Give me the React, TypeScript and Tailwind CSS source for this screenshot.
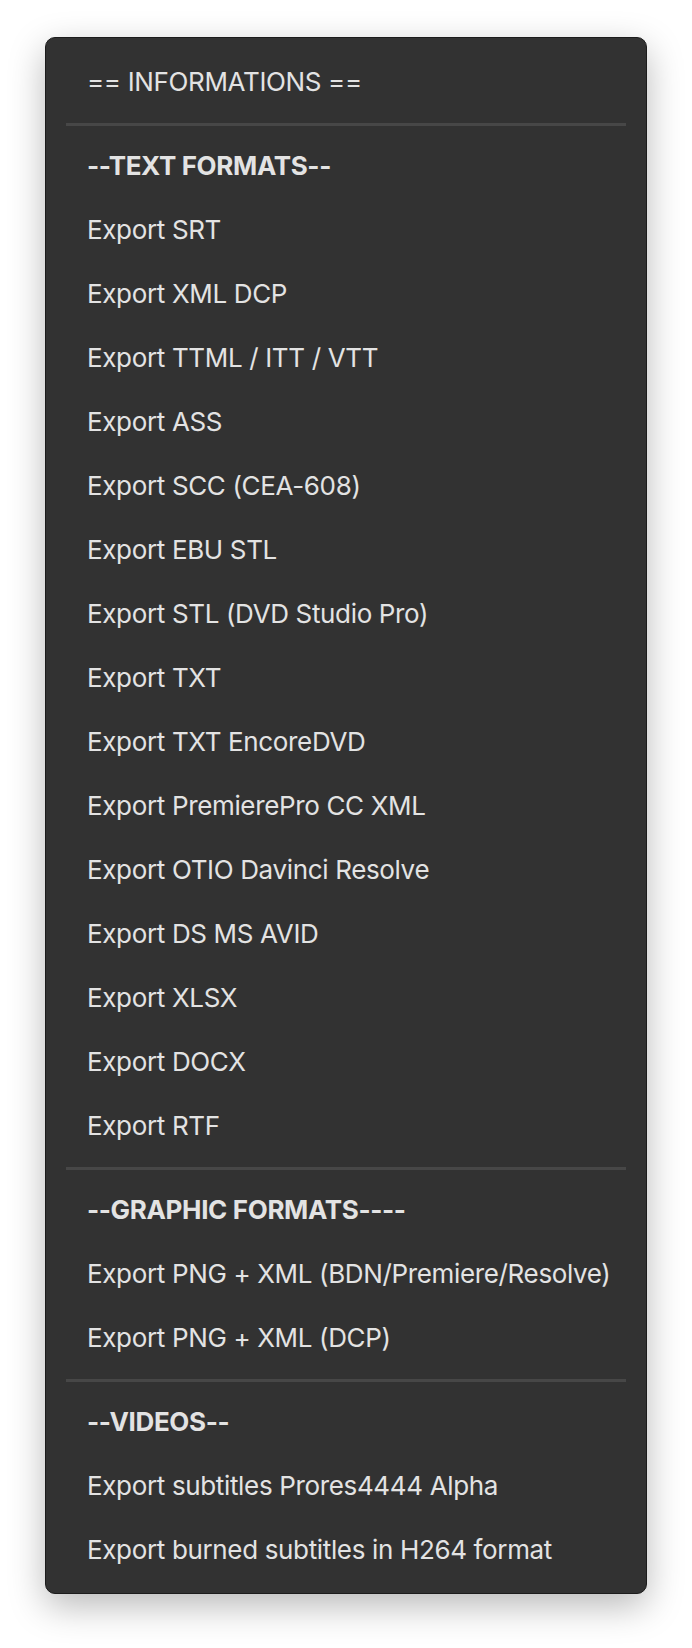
import React from "react";

type Entry =
  | { kind: "item"; label: string; bold?: boolean }
  | { kind: "sep" };

const entries: Entry[] = [
  { kind: "item", label: "== INFORMATIONS ==" },
  { kind: "sep" },
  { kind: "item", label: "--TEXT FORMATS--", bold: true },
  { kind: "item", label: "Export SRT" },
  { kind: "item", label: "Export XML DCP" },
  { kind: "item", label: "Export TTML / ITT / VTT" },
  { kind: "item", label: "Export ASS" },
  { kind: "item", label: "Export SCC (CEA-608)" },
  { kind: "item", label: "Export EBU STL" },
  { kind: "item", label: "Export STL (DVD Studio Pro)" },
  { kind: "item", label: "Export TXT" },
  { kind: "item", label: "Export TXT EncoreDVD" },
  { kind: "item", label: "Export PremierePro CC XML" },
  { kind: "item", label: "Export OTIO Davinci Resolve" },
  { kind: "item", label: "Export DS MS AVID" },
  { kind: "item", label: "Export XLSX" },
  { kind: "item", label: "Export DOCX" },
  { kind: "item", label: "Export RTF" },
  { kind: "sep" },
  { kind: "item", label: "--GRAPHIC FORMATS----", bold: true },
  { kind: "item", label: "Export PNG + XML (BDN/Premiere/Resolve)" },
  { kind: "item", label: "Export PNG + XML (DCP)" },
  { kind: "sep" },
  { kind: "item", label: "--VIDEOS--", bold: true },
  { kind: "item", label: "Export subtitles Prores4444 Alpha" },
  { kind: "item", label: "Export burned subtitles in H264 format" },
];

export default function App() {
  return (
    <div className="min-h-[1648px] w-full bg-white px-[45px] pt-[37px] font-['Inter',sans-serif]">
      <div className="flex flex-col rounded-[10px] border border-[#1c1c1c] bg-[#323232] pt-[12px] pb-[11px] shadow-[0_12px_36px_rgba(0,0,0,0.28)]">
        {entries.map((e, i) =>
          e.kind === "sep" ? (
            <div key={i} className="flex h-[20px] items-center px-[20px]">
              <div className="h-[3px] w-full bg-[#474747]" />
            </div>
          ) : (
            <div
              key={i}
              className={`h-[64px] whitespace-nowrap px-[41px] text-[26px] leading-[64px] tracking-[-0.35px] text-[#e3e3e3] ${
                e.bold ? "font-bold" : "font-normal"
              }`}
            >
              {e.label}
            </div>
          )
        )}
      </div>
    </div>
  );
}
